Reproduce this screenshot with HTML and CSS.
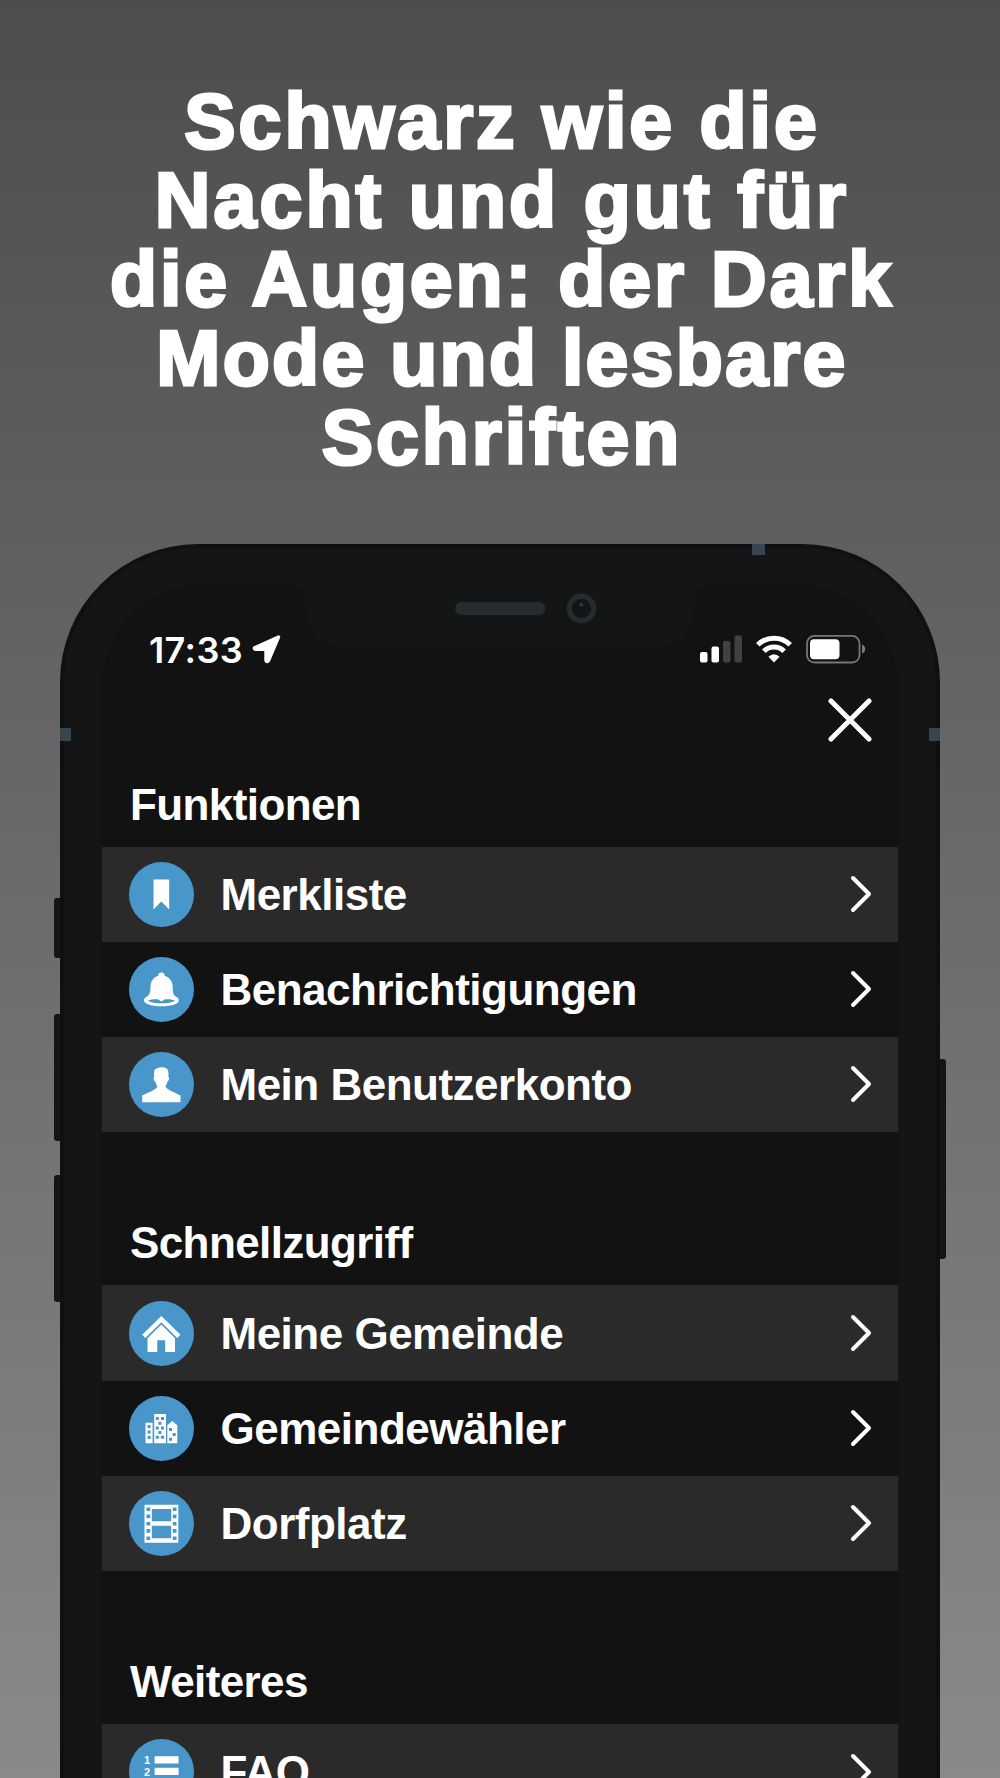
FILE: index.html
```html
<!doctype html>
<html lang="de">

<head>
	<meta charset="utf-8">
	<title>Dark Mode</title>
	<link rel="stylesheet" href="styles.css">
</head>

<body>
	<h1 class="headline">
		<span class="line line1">Schwarz wie die</span>
		<span class="line line2">Nacht und gut für</span>
		<span class="line line3">die Augen: der Dark</span>
		<span class="line line4">Mode und lesbare</span>
		<span class="line line5">Schriften</span>
	</h1>

	<div class="phone">
		<i class="button mute"></i>
		<i class="button volume-up"></i>
		<i class="button volume-down"></i>
		<i class="button power"></i>
		<i class="antenna antenna-left"></i>
		<i class="antenna antenna-top"></i>
		<i class="antenna antenna-right"></i>

		<svg class="notch" width="410" height="63" viewBox="0 0 410 63">
			<path fill="#131516" d="M0 0H410Q400 1 400 13V20C400 44 386 62 362 62H48C24 62 10 44 10 20V13Q10 1 0 0Z"/>
			<rect x="160" y="17" width="90.500" height="13" rx="6.500" fill="#262b2d"/>
			<circle cx="286.500" cy="23.500" r="12.300" fill="none" stroke="#262b2d" stroke-width="5.200"/>
			<circle cx="286.300" cy="19.700" r="2" fill="#30373a"/>
		</svg>

		<div class="screen">
			<div class="statusbar">
				<span class="time">17:33</span>
				<svg class="location" width="29" height="29" viewBox="0 0 29 29">
					<path fill="#fff" stroke="#fff" stroke-width="3.400" stroke-linejoin="round" d="M26.500 2L2.500 12.800Q2 14 3.500 14.200H14V25.500Q15 27.500 16.500 25.700Z"/>
				</svg>
				<div class="indicators">
					<svg width="42" height="29" viewBox="0 0 42 29">
						<rect x="0" y="17" width="7.500" height="10.500" rx="2" fill="#fff"/>
						<rect x="11.500" y="11.500" width="7.500" height="16" rx="2" fill="#fff"/>
						<rect x="23" y="6" width="7.500" height="21.500" rx="2" fill="#414141"/>
						<rect x="34.500" y="0.500" width="7.500" height="27" rx="2" fill="#414141"/>
					</svg>
					<svg width="36" height="29" viewBox="0 0 36 29">
						<path fill="none" stroke="#fff" stroke-width="5" d="M1.800 9.800A23 23 0 0 1 34.200 9.800M7.900 16.200A14.300 14.300 0 0 1 28.100 16.200"/>
						<path fill="#fff" d="M18 27.500L12.400 21.800Q18 16.500 23.600 21.800Z"/>
					</svg>
					<svg width="60" height="29" viewBox="0 0 60 29">
						<rect x="1" y="0.900" width="52.500" height="26.600" rx="7.500" fill="none" stroke="#777" stroke-width="1.800"/>
						<rect x="4" y="4.200" width="29.500" height="20" rx="4" fill="#fff"/>
						<path fill="#777" d="M56 9.500Q59.300 11 59.300 14T56 18.500Z"/>
					</svg>
				</div>
			</div>

			<div class="close">
				<svg width="44" height="44" viewBox="0 0 44 44">
					<path d="M3 3L41 41M41 3L3 41"/>
				</svg>
			</div>

			<section class="group">
				<h2>Funktionen</h2>
				<ul>
					<li>
						<svg class="icon" viewBox="0 0 65 65">
							<path d="M24.500 17.500H40.200V47.500L32.300 39.500L24.500 47.500Z"/>
						</svg>
						<span>Merkliste</span>
						<svg class="chevron" viewBox="0 0 22 38"><path d="M3 3L19 19L3 35"/></svg>
					</li>
					<li>
						<svg class="icon" viewBox="0 0 65 65">
							<path d="M29.200 18.800A3.200 3.200 0 0 1 35.600 18.800C41 20.500 43.700 25 43.700 29.500C43.700 36 44.500 38.200 47 39.700C51.200 41.800 50.600 45.500 46 47.300C39 50 26 50 19 47.300C14.200 45.500 13.600 41.800 17.700 39.700C20.200 38.200 21.500 36 21.500 29.500C21.500 25 24 20.500 29.200 18.800Z"/>
							<path class="cut" d="M18.800 43.700C20.500 42.700 24 42 28.500 42.300L30.300 43Q32.400 45.700 34.500 43L36.300 42.300C41 42 44.300 42.700 46 43.700C43 45.500 38 46.300 32.400 46.300S22 45.500 18.800 43.700Z"/>
						</svg>
						<span>Benachrichtigungen</span>
						<svg class="chevron" viewBox="0 0 22 38"><path d="M3 3L19 19L3 35"/></svg>
					</li>
					<li>
						<svg class="icon" viewBox="0 0 65 65">
							<path d="M25.300 24.800C24.500 18.500 25.500 16.800 28 16.500C30 14.800 35 14.700 37.500 16.300C39.500 18 39.800 20.500 39.300 24.800C40.700 25.200 39.900 29 38.500 29.700C38 31.500 37 33 36.600 34.500C38 38 46 40.500 51.500 43.500V50.200H13.200V43.500C19 40.500 27 38 28.300 34.500C27.700 33 26.700 31.500 26.300 29.700C24.800 29 24 25.200 25.300 24.800Z"/>
						</svg>
						<span>Mein Benutzerkonto</span>
						<svg class="chevron" viewBox="0 0 22 38"><path d="M3 3L19 19L3 35"/></svg>
					</li>
				</ul>
			</section>

			<section class="group">
				<h2>Schnellzugriff</h2>
				<ul>
					<li>
						<svg class="icon" viewBox="0 0 65 65">
							<path d="M32.300 15L51.500 33.800L48.200 37L32.300 21.300L16.400 37L13.200 33.800Z"/>
							<path d="M32.300 23.500L46 37.200V51H36.200V39.300H28.300V51H18.500V37.200Z"/>
						</svg>
						<span>Meine Gemeinde</span>
						<svg class="chevron" viewBox="0 0 22 38"><path d="M3 3L19 19L3 35"/></svg>
					</li>
					<li>
						<svg class="icon" viewBox="0 0 65 65">
							<path d="M16.500 26.700H23.600V47.300H16.500ZM25.200 18H37V47.300H25.200ZM38.300 29.300L43.300 25L48.300 29.300V47.300H38.300Z"/>
							<path class="cut" d="M18.600 29h3v3h-3zM18.600 34.500h3v3h-3zM18.600 40h3v3h-3zM26.800 21h3v3h-3zM32 21h3v3h-3zM29.400 25.700h3v3h-3zM26.800 30.400h3v3h-3zM32 30.400h3v3h-3zM29.400 35h3v3h-3zM26.800 39.800h3v3h-3zM32 39.800h3v3h-3zM40 32h3v3h-3zM43.700 37h3v3h-3zM40 41.700h3v3h-3z"/>
						</svg>
						<span>Gemeindewähler</span>
						<svg class="chevron" viewBox="0 0 22 38"><path d="M3 3L19 19L3 35"/></svg>
					</li>
					<li>
						<svg class="icon" viewBox="0 0 65 65">
							<path d="M15.500 13.700H49.300V51.700H15.500Z"/>
							<path class="cut" d="M22.800 18h19.400v12.300H22.800zM22.800 34.700h19.400v12.600H22.800zM17.500 16.400h3.700v3.700h-3.700zM17.500 23.600h3.700v3.700h-3.700zM17.500 30.900h3.700v3.700h-3.700zM17.500 38.100h3.700v3.700h-3.700zM17.500 45.400h3.700v3.700h-3.700zM43.800 16.400h3.700v3.700h-3.700zM43.800 23.600h3.700v3.700h-3.700zM43.800 30.900h3.700v3.700h-3.700zM43.800 38.100h3.700v3.700h-3.700zM43.800 45.400h3.700v3.700h-3.700z"/>
						</svg>
						<span>Dorfplatz</span>
						<svg class="chevron" viewBox="0 0 22 38"><path d="M3 3L19 19L3 35"/></svg>
					</li>
				</ul>
			</section>

			<section class="group">
				<h2>Weiteres</h2>
				<ul>
					<li>
						<svg class="icon" viewBox="0 0 65 65">
							<text x="15" y="25.300">1</text>
							<text x="15" y="36.500">2</text>
							<path d="M25.600 17.300h24v7.300h-24zM25.600 28.700h24v7.300h-24zM25.600 40.100h24v7.300h-24z"/>
						</svg>
						<span>FAQ</span>
						<svg class="chevron" viewBox="0 0 22 38"><path d="M3 3L19 19L3 35"/></svg>
					</li>
				</ul>
			</section>
		</div>
	</div>
</body>

</html>
```

FILE: styles.css
```css
* {
	margin: 0;
	padding: 0;
	list-style: none;
	box-sizing: border-box;
}

body {
	width: 1000px;
	height: 1778px;
	overflow: hidden;
	background: linear-gradient(#4d4d4d, #898989);
	color: #fff;
	font-family: "Liberation Sans", Arial, sans-serif;
	font-weight: bold;
}

.headline {
	height: 543.5px;
	padding: 82px 0 0 4px;
	font-size: 77px;
	line-height: 79px;
	text-align: center;
	-webkit-text-stroke: 3px #fff;
}

.line {
	display: block;
	white-space: nowrap;
}

.line1 {
	letter-spacing: 3px;
}

.line2 {
	letter-spacing: 3.1px;
}

.line3 {
	letter-spacing: 2.9px;
}

.line4 {
	letter-spacing: 2.3px;
}

.line5 {
	letter-spacing: 3px;
}

/* phone */
.phone {
	position: relative;
	width: 880px;
	height: 1234.5px;
	margin: 0 auto;
	padding: 37px 38px 0;
	border: 4px solid #0f1110;
	border-bottom: 0;
	border-radius: 138px 138px 0 0;
	background: #131516;
}

.button {
	position: absolute;
	left: -10px;
	width: 6px;
	background: #131516;
	border-radius: 3px 0 0 3px;
}

.mute {
	top: 350px;
	height: 60px;
}

.volume-up {
	top: 466px;
	height: 127px;
}

.volume-down {
	top: 627px;
	height: 127px;
}

.power {
	top: 511px;
	left: auto;
	right: -10px;
	height: 200px;
	border-radius: 0 3px 3px 0;
}

.antenna {
	position: absolute;
	top: 180.5px;
	width: 11px;
	height: 13px;
	background: #37464e;
}

.antenna-left {
	left: -4px;
}

.antenna-right {
	right: -4px;
}

.antenna-top {
	top: -4px;
	left: 688px;
	width: 13px;
	height: 11px;
}

.notch {
	position: absolute;
	top: 37px;
	left: 231px;
}

.screen {
	height: 1193.5px;
	padding-top: 28px;
	border-radius: 100px 100px 0 0;
	background: #121212;
	overflow: hidden;
}

.statusbar {
	display: flex;
	align-items: center;
	height: 74px;
	padding: 0 32px 0 47px;
}

.time {
	width: 96px;
	font: 600 36px/40px Inter, sans-serif;
	letter-spacing: 0.4px;
}

.location {
	margin-left: 7px;
}

.indicators {
	display: flex;
	gap: 14px;
	margin-left: auto;
}

.close {
	display: flex;
	align-items: center;
	justify-content: flex-end;
	height: 66px;
	padding-right: 26.5px;
}

.close path {
	fill: none;
	stroke: #fff;
	stroke-width: 5;
	stroke-linecap: round;
}

/* menu */
.group {
	margin-bottom: 59.7px;
}

.group h2 {
	height: 94px;
	padding: 25px 28px 0;
	font-size: 44px;
	line-height: 54px;
	letter-spacing: -0.6px;
}

.group li {
	display: flex;
	align-items: center;
	height: 95.1px;
	padding: 0 26px 0 27px;
	font-size: 44px;
	letter-spacing: -0.5px;
}

.group li:nth-child(odd) {
	background: #2a2a2a;
}

.group li span {
	flex: 1;
	padding: 1px 0 0 26.5px;
}

.icon {
	width: 65px;
	height: 65px;
	border-radius: 50%;
	background: #4896ca;
	fill: #fff;
}

.icon .cut {
	fill: #4896ca;
}

.icon text {
	font-size: 11px;
	letter-spacing: 0;
}

.chevron {
	width: 22px;
	height: 38px;
	fill: none;
	stroke: #fff;
	stroke-width: 4;
	stroke-linecap: round;
	stroke-linejoin: round;
}
```
